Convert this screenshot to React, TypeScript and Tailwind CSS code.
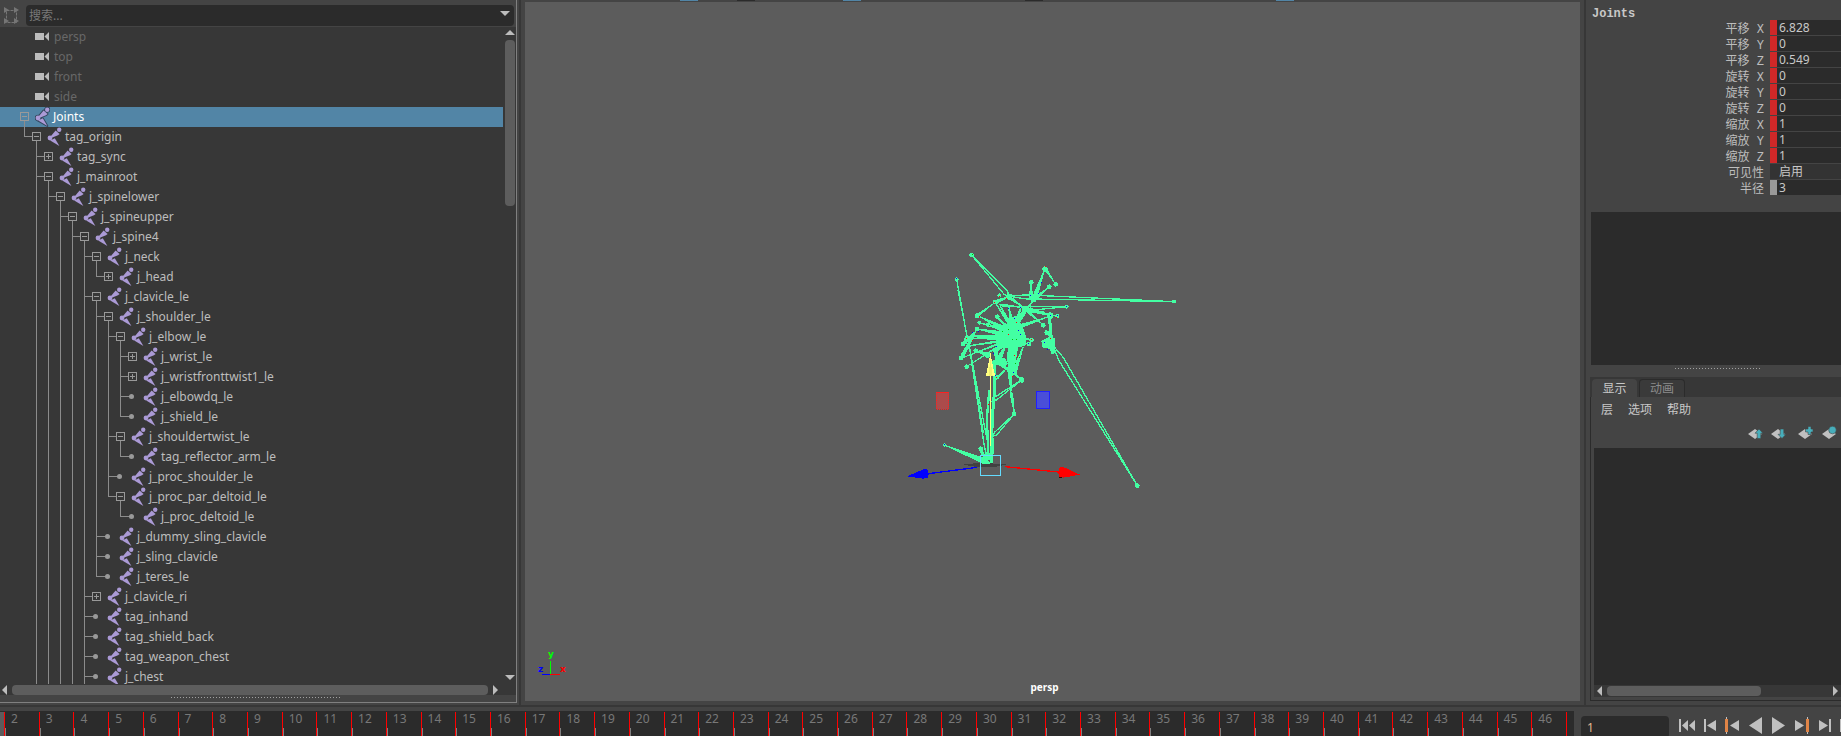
import React from "react";

type Mark = "open" | "closed" | "leaf";
type Node = { name: string; depth: number; mark: Mark };

const CAMERAS = ["persp", "top", "front", "side"];

const NODES: Node[] = [
  { name: "Joints", depth: 0, mark: "open" },
  { name: "tag_origin", depth: 1, mark: "open" },
  { name: "tag_sync", depth: 2, mark: "closed" },
  { name: "j_mainroot", depth: 2, mark: "open" },
  { name: "j_spinelower", depth: 3, mark: "open" },
  { name: "j_spineupper", depth: 4, mark: "open" },
  { name: "j_spine4", depth: 5, mark: "open" },
  { name: "j_neck", depth: 6, mark: "open" },
  { name: "j_head", depth: 7, mark: "closed" },
  { name: "j_clavicle_le", depth: 6, mark: "open" },
  { name: "j_shoulder_le", depth: 7, mark: "open" },
  { name: "j_elbow_le", depth: 8, mark: "open" },
  { name: "j_wrist_le", depth: 9, mark: "closed" },
  { name: "j_wristfronttwist1_le", depth: 9, mark: "closed" },
  { name: "j_elbowdq_le", depth: 9, mark: "leaf" },
  { name: "j_shield_le", depth: 9, mark: "leaf" },
  { name: "j_shouldertwist_le", depth: 8, mark: "open" },
  { name: "tag_reflector_arm_le", depth: 9, mark: "leaf" },
  { name: "j_proc_shoulder_le", depth: 8, mark: "leaf" },
  { name: "j_proc_par_deltoid_le", depth: 8, mark: "open" },
  { name: "j_proc_deltoid_le", depth: 9, mark: "leaf" },
  { name: "j_dummy_sling_clavicle", depth: 7, mark: "leaf" },
  { name: "j_sling_clavicle", depth: 7, mark: "leaf" },
  { name: "j_teres_le", depth: 7, mark: "leaf" },
  { name: "j_clavicle_ri", depth: 6, mark: "closed" },
  { name: "tag_inhand", depth: 6, mark: "leaf" },
  { name: "tag_shield_back", depth: 6, mark: "leaf" },
  { name: "tag_weapon_chest", depth: 6, mark: "leaf" },
  { name: "j_chest", depth: 6, mark: "leaf" },
];

const CHANNELS = [
  { label: "平移 X", value: "6.828", kind: "keyed" },
  { label: "平移 Y", value: "0", kind: "keyed" },
  { label: "平移 Z", value: "0.549", kind: "keyed" },
  { label: "旋转 X", value: "0", kind: "keyed" },
  { label: "旋转 Y", value: "0", kind: "keyed" },
  { label: "旋转 Z", value: "0", kind: "keyed" },
  { label: "缩放 X", value: "1", kind: "keyed" },
  { label: "缩放 Y", value: "1", kind: "keyed" },
  { label: "缩放 Z", value: "1", kind: "keyed" },
  { label: "可见性", value: "启用", kind: "plain" },
  { label: "半径", value: "3", kind: "locked" },
];

const FRAMES = Array.from({ length: 45 }, (_, i) => i + 2);

/* True when another node of depth k follows row i under the same parent. */
function continues(i: number, k: number): boolean {
  for (let j = i + 1; j < NODES.length; j++) {
    if (NODES[j].depth < k) return false;
    if (NODES[j].depth === k) return true;
  }
  return k > 1;
}

function Guides({ index }: { index: number }) {
  const { depth, mark } = NODES[index];
  const lines: React.ReactNode[] = [];
  for (let k = 1; k <= depth; k++) {
    const x = 24.5 + 12 * (k - 1);
    if (continues(index, k)) lines.push(<path key={k} d={`M${x} 0V20`} />);
    else if (k === depth) lines.push(<path key={k} d={`M${x} 0V10`} />);
  }
  if (depth > 0) lines.push(<path key="h" d={`M${12.5 + 12 * depth} 9.5H${20 + 12 * depth}`} />);
  if (mark === "open") lines.push(<path key="d" d={`M${24.5 + 12 * depth} 14V20`} />);
  return (
    <svg width={20 + 12 * depth} height="20" className="shrink-0 overflow-visible" fill="none" stroke="#8c8c8c" shapeRendering="crispEdges" aria-hidden="true">
      {lines}
    </svg>
  );
}

function Expander({ mark, name }: { mark: Mark; name: string }) {
  if (mark === "leaf") {
    return (
      <svg width="9" height="20" className="shrink-0" aria-hidden="true">
        <path d="M0 9.5H3" stroke="#8c8c8c" shapeRendering="crispEdges" />
        <circle cx="3.5" cy="9.5" r="2.5" fill="#999" />
      </svg>
    );
  }
  return (
    <button type="button" aria-label={`${mark === "open" ? "Collapse" : "Expand"} ${name}`} className="block h-5 w-[9px] shrink-0">
      <svg width="9" height="20" fill="none" stroke="#999" shapeRendering="crispEdges" className="block">
        <rect x="0.5" y="5.5" width="8" height="8" />
        <path d={mark === "open" ? "M2 9.5H7" : "M2 9.5H7M4.5 7V12"} />
      </svg>
    </button>
  );
}

function JointIcon({ outlined }: { outlined: boolean }) {
  const shapes = (
    <>
      <circle cx="12.2" cy="2.7" r="2.2" />
      <circle cx="3" cy="11" r="2.4" />
      <path d="M8.6 3.4L12.6 7L11 8.2L4.2 11L3.6 9.4Z" />
      <path d="M3.2 13.6L7.8 11.2L12.4 19Z" />
    </>
  );
  return (
    <svg width="15" height="20" viewBox="0 0 15 20" className="shrink-0" fill="#ab9ad6" aria-hidden="true">
      {outlined && (
        <g stroke="#33455c" strokeWidth="1.8" strokeLinejoin="round">
          {shapes}
        </g>
      )}
      {shapes}
    </svg>
  );
}

function CameraIcon() {
  return (
    <svg width="15" height="20" viewBox="0 0 15 20" className="shrink-0" fill="#bcbcbc" aria-hidden="true">
      <rect x="0" y="6" width="9" height="7" shapeRendering="crispEdges" />
      <path d="M9.500 9.500L14 5V14Z" />
    </svg>
  );
}

function Arrow({ dir }: { dir: "up" | "down" | "left" | "right" }) {
  const d = {
    up: "M0 5L5 0L10 5Z",
    down: "M0 0H10L5 5Z",
    left: "M5 0V10L0 5Z",
    right: "M0 0V10L5 5Z",
  }[dir];
  const flat = dir === "up" || dir === "down";
  return (
    <svg width={flat ? 10 : 5} height={flat ? 5 : 10} fill="#bcbcbc" className="block shrink-0" aria-hidden="true">
      <path d={d} />
    </svg>
  );
}

function Outliner() {
  return (
    <section aria-label="Outliner" className="flex w-[517px] shrink-0 flex-col border-r border-b border-[#808080]">
      <div className="flex h-[27px] shrink-0 items-end pb-px">
        <button type="button" aria-label="Filter" className="mb-px ml-1 h-[18px] w-[22px] shrink-0">
          <svg width="15" height="18" fill="none" stroke="#757575" className="block">
            <rect x="2.500" y="3.500" width="10" height="12" strokeDasharray="3 1" />
            <g fill="#757575" stroke="none">
              <path d="M0 0L5 3L0 6Z" />
              <path d="M10 0L15 3L10 6Z" />
              <path d="M0 11L5 14L0 17Z" />
              <path d="M10 11L15 14L10 17Z" />
            </g>
          </svg>
        </button>
        <div className="mr-[2px] flex h-[21px] flex-1 items-center rounded-sm bg-[#2b2b2b] pr-1 pl-[3px]">
          <input aria-label="搜索" placeholder="搜索..." className="min-w-0 flex-1 bg-transparent text-xs text-[#bbb] outline-none placeholder:text-[#787878]" />
          <button type="button" aria-label="Search history" className="pb-1">
            <Arrow dir="down" />
          </button>
        </div>
      </div>
      <div className="flex min-h-0 flex-1 bg-[#373737]">
        <div role="tree" className="min-w-0 flex-1 overflow-hidden">
          {CAMERAS.map((name) => (
            <div key={name} role="treeitem" className="flex h-5 items-center gap-1 pl-[35px] leading-5 text-[#686868]">
              <CameraIcon />
              <span>{name}</span>
            </div>
          ))}
          {NODES.map((node, i) => (
            <div
              key={node.name}
              role="treeitem"
              aria-selected={i === 0}
              className={i === 0 ? "flex h-5 items-center bg-[#5285a6] leading-5 text-white" : "flex h-5 items-center leading-5 text-[#bdbdbd]"}
            >
              <Guides index={i} />
              <Expander mark={node.mark} name={node.name} />
              <span className="ml-[6px] flex items-center gap-[3px]">
                <JointIcon outlined={i === 0} />
                <span>{node.name}</span>
              </span>
            </div>
          ))}
        </div>
        <div className="flex w-[13px] shrink-0 flex-col items-center pt-[3px] pb-1">
          <Arrow dir="up" />
          <div className="mt-[5px] h-[166px] w-[10px] rounded bg-[#5d5d5d]" />
          <div className="mt-auto">
            <Arrow dir="down" />
          </div>
        </div>
      </div>
      <div className="flex h-[11px] shrink-0 items-center bg-[#373737] pr-[18px] pl-[2px]">
        <Arrow dir="left" />
        <div className="mx-[5px] h-[10px] flex-1 rounded bg-[#5d5d5d]" />
        <Arrow dir="right" />
      </div>
      <div className="flex h-[7px] shrink-0 justify-center pt-[2px] pr-1">
        <div className="h-px w-[170px] bg-[repeating-linear-gradient(90deg,#a0a0a0_0_1px,transparent_1px_3px)]" />
      </div>
    </section>
  );
}

/* Bones drawn as narrow two-line wedges: x1, y1, x2, y2, half width at the start. */
const LONG_BONES = [
  [388, 200, 275, 75, 7],
  [388, 199, 882, 215, 6],
  [435, 236, 560, 230, 6],
  [326, 690, 268, 350, 6],
  [518, 345, 772, 767, 8],
  [340, 618, 403, 552, 5],
  [338, 512, 425, 450, 5],
];

const BONES = [
  [330, 700, 193, 645, 8],
  [462, 208, 495, 115, 6],
  [495, 115, 527, 163, 3],
  [462, 208, 508, 170, 4],
  [452, 205, 454, 157, 5],
  [400, 290, 462, 208, 9],
  [400, 300, 345, 217, 4],
  [400, 300, 385, 225, 6],
  [400, 300, 425, 225, 6],
  [400, 300, 358, 222, 4],
  [395, 305, 292, 257, 6],
  [395, 305, 298, 278, 5],
  [395, 310, 325, 284, 7],
  [395, 305, 350, 260, 6],
  [390, 320, 280, 318, 4],
  [390, 325, 262, 325, 4],
  [385, 315, 292, 297, 7],
  [385, 330, 262, 348, 3],
  [385, 330, 243, 385, 2],
  [385, 330, 260, 410, 2],
  [405, 320, 455, 330, 7],
  [410, 330, 445, 342, 5],
  [412, 292, 500, 262, 5],
  [440, 242, 490, 285, 3],
  [440, 240, 530, 258, 4],
  [445, 236, 490, 248, 4],
  [292, 257, 345, 217, 3],
  [345, 217, 388, 200, 5],
  [243, 385, 292, 295, 5],
  [250, 342, 292, 297, 5],
  [360, 225, 430, 232, 3],
  [385, 200, 435, 235, 4],
  [325, 375, 287, 362, 5],
  [400, 430, 430, 350, 7],
  [395, 410, 415, 340, 7],
  [350, 400, 380, 340, 8],
  [385, 415, 425, 450, 5],
  [350, 445, 385, 410, 3],
  [350, 395, 400, 430, 5],
  [390, 415, 393, 485, 7],
  [393, 485, 403, 550, 4],
  [385, 330, 345, 370, 6],
];

const JOINTS = [
  [275, 75, 7], [230, 148, 6], [882, 215, 6], [560, 230, 6], [772, 767, 7], [193, 645, 5], [495, 117, 8],
  [527, 163, 7], [508, 170, 7], [454, 157, 7], [388, 200, 9], [462, 208, 8], [345, 217, 7], [358, 196, 6],
  [292, 257, 8], [298, 278, 6], [325, 284, 7], [352, 260, 7], [292, 297, 7], [278, 318, 7], [262, 327, 9],
  [250, 342, 7], [243, 385, 7], [260, 410, 7], [287, 362, 7], [265, 350, 7], [490, 286, 7], [532, 258, 6],
  [488, 248, 6], [510, 257, 10], [500, 308, 7], [455, 330, 7], [447, 343, 7], [425, 450, 8], [403, 552, 7],
  [302, 656, 7], [345, 398, 8], [404, 428, 7], [350, 442, 7], [435, 236, 9], [322, 375, 9],
];

const SPECKS: [number, number, string][] = [
  [358, 199, "#f00"], [380, 206, "#f00"], [344, 217, "#f00"], [386, 235, "#00f"], [422, 232, "#00f"], [403, 266, "#00f"],
  [409, 277, "#f00"], [415, 301, "#00f"], [385, 313, "#f00"], [421, 313, "#00f"], [385, 298, "#0b0"], [398, 328, "#0b0"],
  [260, 325, "#f00"], [277, 331, "#f00"], [277, 307, "#00f"], [295, 304, "#00f"], [299, 260, "#f00"], [511, 325, "#f00"],
  [511, 256, "#00f"], [529, 262, "#f00"], [532, 256, "#00f"], [502, 358, "#00f"], [493, 337, "#00f"], [349, 349, "#00f"],
  [404, 376, "#f00"], [413, 380, "#f00"], [407, 401, "#0b0"], [398, 440, "#f00"], [400, 427, "#00f"], [349, 442, "#f00"],
  [346, 436, "#00f"], [325, 523, "#f00"], [484, 157, "#00f"], [475, 190, "#00f"], [452, 196, "#00f"], [496, 110, "#f00"],
  [230, 145, "#00f"], [560, 230, "#00f"], [193, 643, "#00f"], [277, 73, "#0b0"], [328, 286, "#0b0"], [455, 328, "#f00"],
  [446, 340, "#00f"], [418, 382, "#0b0"], [409, 329, "#0b0"], [367, 304, "#0b0"], [340, 370, "#00f"],
];

function wedgePath([x1, y1, x2, y2, w]: number[]): string {
  const len = Math.hypot(x2 - x1, y2 - y1);
  const px = (-(y2 - y1) / len) * w;
  const py = ((x2 - x1) / len) * w;
  const mx = x1 + (x2 - x1) * 0.1;
  const my = y1 + (y2 - y1) * 0.1;
  return `M${x1} ${y1}L${mx + px} ${my + py}L${x2} ${y2}L${mx - px} ${my - py}Z`;
}

function Scene() {
  return (
    <svg viewBox="0 0 1055 699" className="block h-full w-full" aria-label="Skeleton view" role="img">
      <g transform="translate(355 228) scale(0.33333)" shapeRendering="crispEdges">
        <path d="M249 704L300 698L380 703L350 710L290 711Z" fill="#414141" />
        <g stroke="#43ffa3" strokeWidth="4" fill="none">
          {LONG_BONES.map((w, i) => (
            <path key={i} d={wedgePath(w)} />
          ))}
          <g fill="#43ffa3" strokeWidth="3">
            {BONES.map((w, i) => (
              <path key={i} d={wedgePath(w)} />
            ))}
          </g>
          <path d="M230 148L262 325L268 350" />
          <path d="M234 180L262 322" />
          <path d="M508 257L514 325" strokeWidth="9" />
          <path d="M498 300L514 325" strokeWidth="6" />
          <path d="M344 400L344 480L337 560L333 700" strokeWidth="9" />
          <path d="M328 480L322 550L322 600L326 690" strokeWidth="7" />
          <path d="M338 625L334 700" strokeWidth="10" />
          <path d="M302 656L320 690M300 664L326 700" strokeWidth="5" />
          <path d="M315 655L322 696M280 420L310 610" />
        </g>
        <g fill="#43ffa3">
          <path d="M392 262L410 258L428 290L440 325L436 348L412 352L402 362L380 354L350 356L352 320L368 300Z" />
          <path d="M340 365L352 350L356 380L376 386L384 402L372 412L350 404Z" />
          <path d="M386 350L408 350L402 420L386 420L380 380Z" />
          <path d="M484 332L508 320L526 325L524 348L526 368L516 374L508 356L486 352Z" />
          {JOINTS.map(([x, y, r], i) => (
            <circle key={i} cx={x} cy={y} r={r} />
          ))}
        </g>
        {SPECKS.map(([x, y, c], i) => (
          <rect key={i} x={x - 1} y={y - 1} width="3" height="3" fill={c} />
        ))}
        <path d="M331 370V648" stroke="#ffff80" strokeWidth="4" />
        <path d="M331 372L345 437H318Z" fill="#ffff80" />
        <path d="M331 385L338 437H326Z" fill="#f0f070" />
        <path d="M292 712L145 731" stroke="#00f" strokeWidth="4" />
        <path d="M81 739L130 718L142 718L147 732L143 744L128 746Z" fill="#00f" />
        <path d="M375 710L535 726" stroke="#f00" strokeWidth="4" />
        <path d="M600 734L552 712L540 711L534 728L538 740L550 743Z" fill="#f00" />
        <path d="M538 740H546V743H538Z" fill="#400" />
        <rect x="301.500" y="676.500" width="60" height="60" fill="none" stroke="#64dcff" strokeWidth="3" />
        <rect x="169.500" y="487.500" width="37" height="51" fill="#ab4b4b" stroke="#ff2020" strokeWidth="3" strokeDasharray="4 2" />
        <rect x="469.500" y="485.500" width="39" height="51" fill="#4a4ed8" stroke="#2020ff" strokeWidth="3" />
      </g>
    </svg>
  );
}

function Viewport() {
  return (
    <main className="flex min-w-0 flex-1 flex-col px-1 pb-1">
      <div className="flex h-[2px] shrink-0 pl-[155px]">
        <i className="h-px w-[18px] bg-[#5285a6]" />
        <i className="ml-[39px] h-px w-[18px] bg-[#2b2b2b]" />
        <i className="ml-[88px] h-px w-[18px] bg-[#5285a6]" />
        <i className="ml-[164px] h-px w-[18px] bg-[#2b2b2b]" />
        <i className="ml-[233px] h-px w-[18px] bg-[#5285a6]" />
      </div>
      <div className="relative min-h-0 flex-1 bg-[#5c5c5c]">
        <Scene />
        <svg width="32" height="28" className="absolute bottom-6 left-3 overflow-visible" fontFamily="DejaVu Sans, sans-serif" fontSize="9" fontWeight="bold" aria-hidden="true">
          <path d="M13.500 12V25" stroke="#0f0" />
          <path d="M5 25.500H13" stroke="#00f" />
          <path d="M13 25.500H23" stroke="#f00" />
          <text x="11" y="8" fill="#0f0">y</text>
          <text x="1" y="23" fill="#00f">z</text>
          <text x="23" y="23" fill="#f00">x</text>
        </svg>
        <span className="absolute bottom-[6px] left-1/2 -ml-[22px] text-[10px] leading-4 font-bold text-white">persp</span>
      </div>
    </main>
  );
}

function ChannelBox() {
  return (
    <section aria-label="Channel box" className="shrink-0">
      <h2 className="h-5 pt-2 pl-[6px] font-['Liberation_Mono',monospace] text-xs leading-3 font-bold text-[#c8c8c8]">Joints</h2>
      <div className="flex flex-col gap-px">
        {CHANNELS.map(({ label, value, kind }) => (
          <label key={label} className="flex h-[15px]">
            <span className="w-[178px] shrink-0 text-right font-['Liberation_Mono','Noto_Sans_CJK_SC',monospace] text-xs leading-5 whitespace-pre text-[#bdbdbd]">{label}</span>
            <span className={kind === "keyed" ? "ml-[6px] w-[7px] shrink-0 bg-[#d02828]" : kind === "locked" ? "ml-[6px] w-[7px] shrink-0 bg-[#999]" : "ml-[6px] w-[7px] shrink-0 bg-[#333]"} />
            <input defaultValue={value} className={kind === "plain" ? "min-w-0 flex-1 bg-[#333] pl-[2px] text-xs leading-[15px] text-[#c8c8c8] outline-none" : "min-w-0 flex-1 bg-[#2b2b2b] pl-[2px] text-xs leading-[15px] text-[#c8c8c8] outline-none"} />
          </label>
        ))}
      </div>
    </section>
  );
}

function LayerIcon({ kind }: { kind: "up" | "down" | "add" | "assign" }) {
  return (
    <svg width="15" height="14" viewBox="0 0 15 14" className="block" aria-hidden="true">
      <path d="M0 8L7 3L14 8L7 13Z" fill="#c0c0c0" />
      <g fill="#47aebb" stroke="#444" strokeWidth="0.6">
        {kind === "up" && <path d="M11 3L15 7.200H12.800V12.500H9.200V7.200H7Z" />}
        {kind === "down" && <path d="M11 12.500L15 8.300H12.800V3H9.200V8.300H7Z" />}
        {kind === "add" && <path d="M10 0.500H13V3H15V6H13V8.500H10V6H7.500V3H10Z" />}
        {kind === "assign" && <circle cx="10.500" cy="4" r="3.800" />}
      </g>
    </svg>
  );
}

function LayerEditor() {
  return (
    <section aria-label="Layer editor" className="ml-1 flex min-h-0 flex-1 flex-col">
      <div role="tablist" className="flex h-5 shrink-0 gap-[2px] bg-[#373737] pt-[2px] pl-[2px]">
        <button type="button" role="tab" aria-selected="true" className="w-[45px] rounded-t-sm bg-[#444] pt-px text-xs leading-[17px] text-[#c8c8c8]">显示</button>
        <button type="button" role="tab" aria-selected="false" className="w-[46px] rounded-t-sm border border-b-0 border-[#2b2b2b] bg-[#3a3a3a] text-xs leading-[17px] text-[#8c8c8c]">动画</button>
      </div>
      <div className="flex min-h-0 flex-1 flex-col border-b border-l border-[#2b2b2b] pb-[3px] pl-[3px]">
        <div className="flex h-[26px] shrink-0 items-center gap-[15px] pl-[7px] text-xs text-[#c8c8c8]">
          <button type="button">层</button>
          <button type="button">选项</button>
          <button type="button">帮助</button>
        </div>
        <div className="flex h-[25px] shrink-0 items-start justify-end pt-[3px] pr-1">
          <button type="button" aria-label="Move layer up" className="mr-2"><LayerIcon kind="up" /></button>
          <button type="button" aria-label="Move layer down" className="mr-3"><LayerIcon kind="down" /></button>
          <button type="button" aria-label="New layer" className="mr-[9px]"><LayerIcon kind="add" /></button>
          <button type="button" aria-label="New layer from selection"><LayerIcon kind="assign" /></button>
        </div>
        <div className="min-h-0 flex-1 bg-[#2b2b2b]" />
        <div className="flex h-3 shrink-0 items-center bg-[#373737] px-[3px]">
          <Arrow dir="left" />
          <div className="mx-[5px] flex flex-1">
            <div className="h-[10px] w-[154px] rounded bg-[#5d5d5d]" />
          </div>
          <Arrow dir="right" />
        </div>
      </div>
    </section>
  );
}

function Transport() {
  const g = "#c0c0c0";
  const o = "#e08446";
  const icons = [
    { name: "Go to start", w: 16, body: <path d="M0 0H2V13H0ZM9 1V12L3 6.500ZM16 1V12L10 6.500Z" fill={g} />, cls: "" },
    { name: "Step back", w: 12, body: <path d="M0 0H2V13H0ZM12 1V12L3 6.500Z" fill={g} />, cls: "ml-[9px]" },
    { name: "Previous key", w: 14, body: <><path d="M14 1V12L5 6.500Z" fill={g} /><path d="M1.500 -2V15" stroke={g} /><path d="M0 0H3V13H0Z" fill={o} /></>, cls: "ml-[9px]" },
    { name: "Play backwards", w: 13, body: <path d="M13 -2V15L0 6.500Z" fill={g} />, cls: "ml-[10px]" },
    { name: "Play forwards", w: 13, body: <path d="M0 -2V15L13 6.500Z" fill={g} />, cls: "ml-[10px]" },
    { name: "Next key", w: 14, body: <><path d="M0 1V12L9 6.500Z" fill={g} /><path d="M12.500 -2V15" stroke={g} /><path d="M11 0H14V13H11Z" fill={o} /></>, cls: "ml-[10px]" },
    { name: "Step forward", w: 12, body: <path d="M0 1V12L9 6.500ZM10 0H12V13H10Z" fill={g} />, cls: "ml-[10px]" },
    { name: "Go to end", w: 1, body: <path d="M0 0H1V13H0Z" fill={g} />, cls: "ml-[9px]" },
  ];
  return (
    <div className="flex shrink-0 items-start">
      {icons.map(({ name, w, body, cls }) => (
        <button key={name} type="button" aria-label={name} className={cls}>
          <svg width={w} height="13" className="block overflow-visible">{body}</svg>
        </button>
      ))}
    </div>
  );
}

function TimeSlider() {
  return (
    <footer className="flex h-[29px] shrink-0 overflow-hidden pt-1">
      <div className="flex min-w-0 flex-1 bg-[#2b2b2b] pt-px">
        <div className="w-1 shrink-0 bg-[#5c5c5c]" />
        <div className="grid min-w-0 flex-1 grid-cols-[repeat(45,minmax(0,1fr))_8px]">
          {FRAMES.map((frame) => (
            <div key={frame} className="flex flex-col justify-between border-l border-[#f00]">
              <span className="pl-[6px] text-xs leading-[13px] text-[#787878]">{frame}</span>
              <i className="h-2 w-px bg-[#808080]" />
            </div>
          ))}
          <div className="border-l border-[#f00]" />
        </div>
      </div>
      <div className="ml-[7px] flex w-[260px] shrink-0">
        <input aria-label="Current frame" defaultValue="1" className="mt-[5px] h-[22px] w-[88px] rounded-sm bg-[#2b2b2b] pl-[6px] text-xs text-[#e0b890] outline-none" />
        <div className="ml-[10px] pt-2">
          <Transport />
        </div>
      </div>
    </footer>
  );
}

export default function App() {
  return (
    <div className="flex h-screen flex-col overflow-hidden bg-[#444] font-['Noto_Sans','Noto_Sans_CJK_SC',sans-serif] text-xs text-[#c8c8c8]">
      <div className="flex min-h-0 flex-1 border-b-2 border-[#373737]">
        <div className="flex shrink-0 border-r-2 border-[#373737] pr-[2px] pb-[2px]">
          <Outliner />
        </div>
        <Viewport />
        <aside className="flex w-[257px] shrink-0 flex-col border-l-2 border-[#373737] pb-1">
          <ChannelBox />
          <div className="mt-[17px] ml-[5px] h-[153px] shrink-0 bg-[#2b2b2b]" />
          <div className="flex h-3 shrink-0 justify-center pt-[3px] pl-2">
            <div className="h-px w-[86px] bg-[repeating-linear-gradient(90deg,#a0a0a0_0_1px,transparent_1px_3px)]" />
          </div>
          <LayerEditor />
        </aside>
      </div>
      <TimeSlider />
    </div>
  );
}
